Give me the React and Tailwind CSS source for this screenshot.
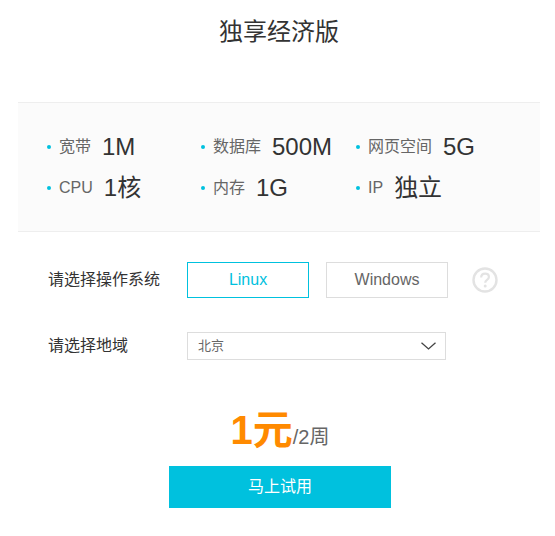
const specs = [
  { label: '宽带', value: '1M' },
  { label: '数据库', value: '500M' },
  { label: '网页空间', value: '5G' },
  { label: 'CPU', value: '1核' },
  { label: '内存', value: '1G' },
  { label: 'IP', value: '独立' },
]

export default function App() {
  return (
    <div className="w-[555px] h-[536px] bg-white overflow-hidden font-['Liberation_Sans','Noto_Sans_CJK_SC',sans-serif] text-[#333]">
      <div className="w-[522px] ml-[18px]">
        <h1 className="h-[102px] pt-[15px] text-center text-[24px] leading-[34px] font-normal">独享经济版</h1>

        {/* Specs */}
        <div className="h-[130px] pt-[23px] pl-[29px] bg-[#fbfbfb] border-y border-[#eeeeee] grid grid-cols-[154px_155px_1fr] auto-rows-[41px]">
          {specs.map((s) => (
            <div key={s.label} className="flex items-center">
              <span className="w-[4px] h-[4px] rounded-full bg-[#00c1de] mr-[8px]"></span>
              <span className="text-[16px] text-[#666] mr-[11px]">{s.label}</span>
              <span className="text-[24px] leading-[34px]">{s.value}</span>
            </div>
          ))}
        </div>

        {/* Options */}
        <div className="pl-[30px] pt-[30px]">
          <div className="flex items-center h-[36px]">
            <span className="w-[139px] text-[16px]">请选择操作系统</span>
            <button className="w-[122px] h-[36px] border border-[#00c1de] text-[#00c1de] text-[16px]">Linux</button>
            <button className="w-[122px] h-[36px] ml-[17px] border border-[#dddddd] text-[#666] text-[16px]">Windows</button>
            <svg className="ml-[24px]" width="26" height="26" viewBox="0 0 26 26" fill="none">
              <circle cx="13" cy="13" r="11.5" stroke="#e3e3e3" strokeWidth="2.4" />
              <path d="M9.2 10.4c0-2.3 1.6-3.7 3.9-3.7s3.8 1.3 3.8 3.3c0 2.8-3.7 2.9-3.7 5.7" stroke="#e3e3e3" strokeWidth="2.2" />
              <circle cx="13.2" cy="18.9" r="1.5" fill="#e3e3e3" />
            </svg>
          </div>
          <div className="flex items-center h-[28px] mt-[34px]">
            <span className="w-[139px] text-[16px]">请选择地域</span>
            <div className="w-[259px] h-[28px] pl-[10px] pr-[9px] border border-[#dddddd] flex items-center justify-between text-[13px] text-[#666]">
              <span>北京</span>
              <svg width="15" height="8" viewBox="0 0 15 8" fill="none">
                <path d="M0.5 0.7L7.5 7L14.5 0.7" stroke="#444" strokeWidth="1.3" />
              </svg>
            </div>
          </div>
        </div>

        {/* Price */}
        <div className="mt-[45px] flex justify-center items-baseline h-[50px] pl-[2px]">
          <span className="text-[40px] leading-[50px] font-bold text-[#ff8a00]">1元</span>
          <span className="text-[20px] text-[#666]">/2周</span>
        </div>
        <button className="block ml-[151px] mt-[11px] w-[222px] h-[42px] bg-[#00c1de] text-white text-[16px]">马上试用</button>
      </div>
    </div>
  )
}
